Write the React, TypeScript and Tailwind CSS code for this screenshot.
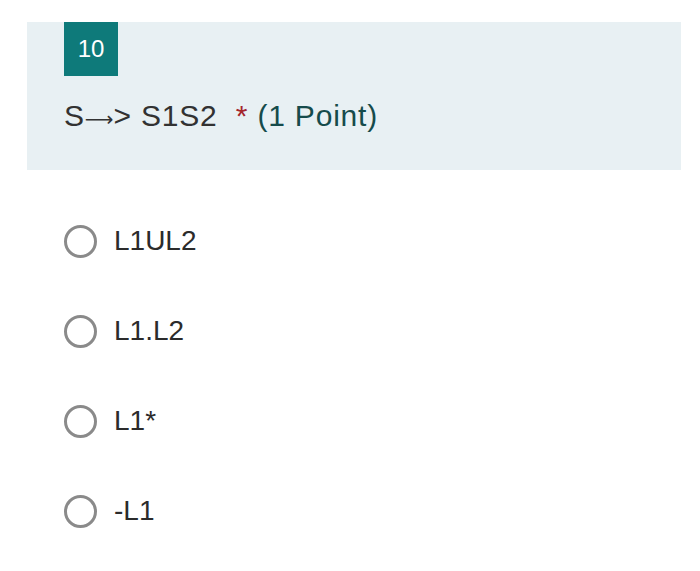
import React from "react";

const options = ["L1UL2", "L1.L2", "L1*", "-L1"];

export default function App() {
  return (
    <div
      className="w-[700px] h-[571px] bg-white pt-[22px] pl-[27px]"
      style={{ fontFamily: '"Liberation Sans", Arial, sans-serif' }}
    >
      <div className="w-[654px] h-[148px] bg-[#e8f0f3] pl-[37px]">
        <div className="w-[54px] h-[54px] bg-[#0e7a7a] text-white text-[24px] flex items-center justify-center">
          10
        </div>
        <div className="mt-[24px] text-[30px] leading-[32px] tracking-[0.8px] text-[#323232] whitespace-pre">
          S<span style={{ fontFamily: '"DejaVu Sans", sans-serif' }} className="text-[20px] tracking-normal">⟶</span>&gt; S1S2 <span className="text-[#a4262c]"> *</span>
          <span className="text-[#164b4b]"> (1 Point)</span>
        </div>
      </div>
      <div className="pl-[37px] pt-[54px] flex flex-col gap-[56px]">
        {options.map((o) => (
          <div key={o} className="flex items-center h-[34px]">
            <div className="w-[33px] h-[33px] rounded-full border-[3px] border-[#8a8a8a]" />
            <span className="ml-[17px] text-[28px] text-[#2b2b2b]">{o}</span>
          </div>
        ))}
      </div>
    </div>
  );
}
